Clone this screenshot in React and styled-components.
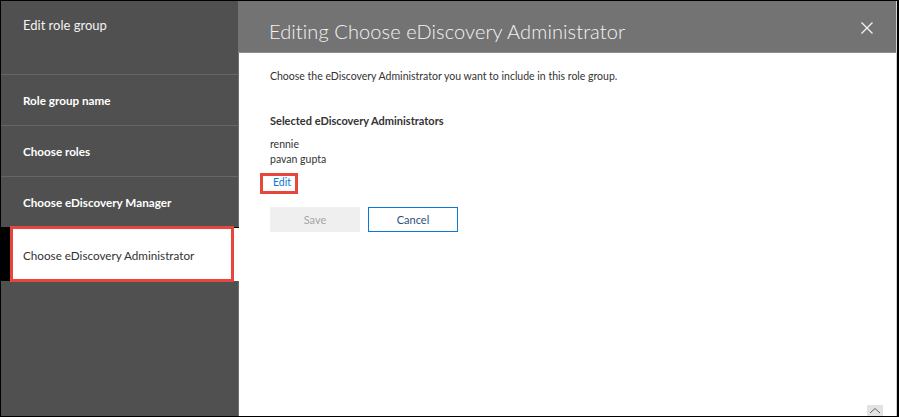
import React from "react";
import styled, { createGlobalStyle } from "styled-components";

const Global = createGlobalStyle`
  html, body { margin: 0; padding: 0; background: #fff; }
  body { font-family: "Segoe UI", Lato, "Open Sans", sans-serif; }
  * { box-sizing: border-box; }
`;

const Frame = styled.div`
  position: relative;
  width: 899px;
  height: 417px;
  display: flex;
  border: 1px solid #000;
  border-right-width: 2px;
  overflow: hidden;
`;

const Sidebar = styled.nav`
  width: 238px;
  flex: none;
  background: #505050;
  border-right: 1px solid #6e6e6e;
  display: flex;
  flex-direction: column;
`;

const SidebarTitle = styled.div`
  height: 73px;
  padding: 15px 0 0 22px;
  color: #f2f2f2;
  font-size: 13px;
  line-height: 18px;
`;

const Step = styled.div`
  height: ${(p) => (p.$active ? "54px" : "51px")};
  display: flex;
  align-items: center;
  padding-left: ${(p) => (p.$active ? "13px" : "22px")};
  border-top: 1px solid ${(p) => (p.$active ? "#000" : "#666")};
  background: ${(p) => (p.$active ? "#fff" : "transparent")};
  border-left: ${(p) => (p.$active ? "9px solid #000" : "none")};
  margin-right: ${(p) => (p.$active ? "-1px" : "0")};
  color: ${(p) => (p.$active ? "#333" : "#fff")};
  font-size: 11.7px;
  font-weight: ${(p) => (p.$active ? 400 : 700)};
  position: relative;
`;

const Highlight = styled.span`
  position: absolute;
  border: 3px solid #e8463d;
  pointer-events: none;
  left: ${(p) => p.$l}px;
  top: ${(p) => p.$t}px;
  right: ${(p) => p.$r}px;
  bottom: ${(p) => p.$b}px;
`;

const Main = styled.section`
  flex: 1;
  display: flex;
  flex-direction: column;
  border-right: 1px solid #d0d0d0;
`;

const Header = styled.header`
  height: 52px;
  flex: none;
  background: #737373;
  border-bottom: 1px solid #8e8e8e;
  display: flex;
  align-items: center;
  justify-content: space-between;
  padding: 9px 22px 0 31px;
  margin-left: -1px;
`;

const Title = styled.h1`
  margin: 0;
  font-size: 20px;
  font-weight: 300;
  color: #f4f4f4;
  letter-spacing: 0.1px;
`;

const CloseBtn = styled.button`
  border: 0;
  background: none;
  padding: 0;
  width: 14px;
  height: 14px;
  display: flex;
  cursor: pointer;
  margin-top: -7px;
`;

const Body = styled.div`
  flex: 1;
  padding: 16px 0 0 31px;
  color: #333;
`;

const Desc = styled.p`
  margin: 0;
  font-size: 10.5px;
  line-height: 14px;
`;

const Label = styled.div`
  margin-top: 31px;
  font-size: 11px;
  font-weight: 700;
  line-height: 14px;
`;

const NameList = styled.div`
  margin-top: 9px;
  font-size: 10.5px;
  line-height: 15px;
`;

const EditWrap = styled.div`
  position: relative;
  width: fit-content;
  margin-top: 6px;
  padding-left: 3px;
  line-height: 14px;
`;

const EditLink = styled.a`
  color: #0a78d4;
  font-size: 10.5px;
  line-height: 14px;
  text-decoration: none;
`;

const Buttons = styled.div`
  display: flex;
  gap: 8px;
  margin-top: 18px;
`;

const Btn = styled.button`
  width: 90px;
  height: 25px;
  font-family: inherit;
  font-size: 11px;
  border: 1px solid ${(p) => (p.$primary ? "#f0f0f0" : "#0a78d4")};
  background: ${(p) => (p.$primary ? "#efefef" : "#fff")};
  color: ${(p) => (p.$primary ? "#a6a6a6" : "#2b4f7c")};
  padding: 0;
`;

const ScrollUp = styled.div`
  position: absolute;
  right: 14px;
  bottom: 0;
  width: 16px;
  height: 11px;
  background: #e3e3e3;
  display: flex;
  align-items: center;
  justify-content: center;
`;

export default function App() {
  return (
    <>
      <Global />
      <Frame>
        <Sidebar>
          <SidebarTitle>Edit role group</SidebarTitle>
          <Step>Role group name</Step>
          <Step>Choose roles</Step>
          <Step>Choose eDiscovery Manager</Step>
          <Step $active>
            Choose eDiscovery Administrator
            <Highlight $l={0} $t={-2} $r={5} $b={-1} />
          </Step>
        </Sidebar>
        <Main>
          <Header>
            <Title>Editing Choose eDiscovery Administrator</Title>
            <CloseBtn aria-label="Close">
              <svg width="14" height="14" viewBox="0 0 14 14">
                <path d="M1.5 1.5 L12.5 12.5 M12.5 1.5 L1.5 12.5" stroke="#f2f2f2" strokeWidth="1.3" fill="none" />
              </svg>
            </CloseBtn>
          </Header>
          <Body>
            <Desc>Choose the eDiscovery Administrator you want to include in this role group.</Desc>
            <Label>Selected eDiscovery Administrators</Label>
            <NameList>
              <div>rennie</div>
              <div>pavan gupta</div>
            </NameList>
            <EditWrap>
              <EditLink href="#">Edit</EditLink>
              <Highlight $l={-10} $t={0} $r={-7} $b={-5} />
            </EditWrap>
            <Buttons>
              <Btn $primary disabled>Save</Btn>
              <Btn>Cancel</Btn>
            </Buttons>
          </Body>
        </Main>
        <ScrollUp>
          <svg width="12" height="7" viewBox="0 0 12 7">
            <path d="M1 6 L6 1.5 L11 6" stroke="#666" strokeWidth="1" fill="none" />
          </svg>
        </ScrollUp>
      </Frame>
    </>
  );
}
